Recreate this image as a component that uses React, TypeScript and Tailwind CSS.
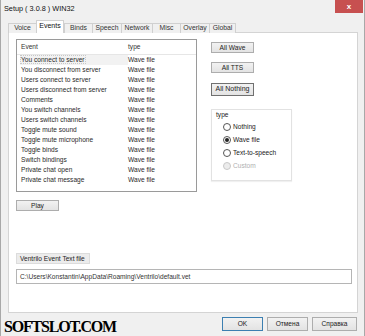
import React from 'react';

const tabs = [
  { label: 'Voice', w: 'w-[28px]' },
  { label: 'Events', w: 'w-[28px]', active: true },
  { label: 'Binds', w: 'w-[28px]' },
  { label: 'Speech', w: 'w-[29px]' },
  { label: 'Network', w: 'w-[31px]' },
  { label: 'Misc', w: 'w-[28px]' },
  { label: 'Overlay', w: 'w-[29px]' },
  { label: 'Global', w: 'w-[27px]' },
];

const events = [
  'You connect to server',
  'You disconnect from server',
  'Users connect to server',
  'Users disconnect from server',
  'Comments',
  'You switch channels',
  'Users switch channels',
  'Toggle mute sound',
  'Toggle mute microphone',
  'Toggle binds',
  'Switch bindings',
  'Private chat open',
  'Private chat message',
];

const radios = [
  { label: 'Nothing' },
  { label: 'Wave file', checked: true },
  { label: 'Text-to-speech' },
  { label: 'Custom', disabled: true },
];

function WinButton({ children, className = '' }: { children: React.ReactNode; className?: string }) {
  return (
    <div
      className={`flex items-center justify-center border bg-gradient-to-b from-[#f2f2f2] to-[#e3e3e3] text-[6.6px] text-[#222] ${className}`}
    >
      {children}
    </div>
  );
}

export default function App() {
  return (
    <div className="relative w-[365px] h-[336px] overflow-hidden bg-[#f0f0f0] border-x border-[#a8a8a8] font-['Liberation_Sans',Arial,sans-serif] text-[#222]">
      {/* title bar */}
      <div className="flex h-[20px] items-start">
        <div className="pl-[3px] pt-[4px] text-[7.3px] leading-[9px] text-[#111]">Setup ( 3.0.8 ) WIN32</div>
        <div className="ml-auto mr-[1px] flex h-[13px] w-[28px] items-center justify-center bg-[#c75050] text-[8px] font-bold leading-none text-white">
          x
        </div>
      </div>

      {/* tabs */}
      <div className="ml-[7px] flex h-[13px] items-end">
        {tabs.map((t, i) =>
          t.active ? (
            <div
              key={t.label}
              className={`relative z-10 flex h-[13px] items-center justify-center border border-b-0 border-[#d0d0d0] bg-white pb-[1px] text-[7px] text-[#111] ${t.w}`}
            >
              {t.label}
            </div>
          ) : (
            <div
              key={t.label}
              className={`flex h-[10px] items-center justify-center border-t border-l border-[#d0d0d0] bg-[#f0f0f0] text-[6.8px] text-[#333] ${i === tabs.length - 1 ? 'border-r' : ''} ${t.w}`}
            >
              {t.label}
            </div>
          )
        )}
      </div>

      {/* tab panel */}
      <div className="-mt-px ml-[7px] h-[281px] w-[350px] border border-[#d4d4d4] bg-white">
        <div className="flex pl-[7px] pt-[6px]">
          {/* event list */}
          <div className="h-[153px] w-[181px] border border-[#9a9a9a] bg-white">
            <div className="flex h-[15px] items-center border-b border-[#e6e6e6] text-[6.6px] text-[#333]">
              <span className="w-[111px] pl-[4px]">Event</span>
              <span>type</span>
            </div>
            {events.map((e, i) => (
              <div key={e} className="flex h-[10px] items-center text-[6.6px] text-[#2a2a2a]">
                <span className={`ml-[3px] w-[108px] pl-[1px] ${i === 0 ? 'bg-[#f2f2f2]' : ''}`}>
                  <span className={i === 0 ? 'outline outline-1 outline-dotted outline-[#c8c8c8]' : ''}>{e}</span>
                </span>
                <span>Wave file</span>
              </div>
            ))}
          </div>

          {/* right side */}
          <div className="ml-[14px] flex flex-col pt-[3px]">
            <WinButton className="h-[11px] w-[43px] border-[#adadad]">All Wave</WinButton>
            <WinButton className="mt-[9px] h-[11px] w-[43px] border-[#adadad]">All TTS</WinButton>
            <WinButton className="mt-[10px] h-[13px] w-[43px] border-[#707070] text-[7px]">All Nothing</WinButton>

            <div className="mt-[13px] h-[72px] w-[81px] border border-[#e2e2e2] bg-white shadow-[0_1px_1px_rgba(0,0,0,0.06)]">
              <div className="pl-[4px] pt-[1px] text-[6.6px] leading-[8px] text-[#222]">type</div>
              <div className="mt-[4px] flex flex-col gap-[5px] pl-[11px]">
                {radios.map((r) => (
                  <div key={r.label} className="flex h-[8px] items-center gap-[2px]">
                    <div
                      className={`flex h-[8px] w-[8px] items-center justify-center rounded-full border ${
                        r.disabled ? 'border-[#c8c8c8] bg-[#ececec]' : 'border-[#555] bg-white'
                      }`}
                    >
                      {r.checked && <div className="h-[4px] w-[4px] rounded-full bg-[#222]" />}
                    </div>
                    <span className={`text-[6.6px] ${r.disabled ? 'text-[#b0b0b0]' : 'text-[#222]'}`}>{r.label}</span>
                  </div>
                ))}
              </div>
            </div>
          </div>
        </div>

        <div className="pl-[7px]">
          <WinButton className="mt-[8px] h-[11px] w-[43px] border-[#adadad]">Play</WinButton>

          <div className="mt-[42px] flex h-[11px] w-[74px] items-center whitespace-nowrap border border-[#dcdcdc] bg-[#ececec] pl-[3px] text-[6.6px] text-[#222]">
            Ventrilo Event Text file
          </div>

          <div className="mt-[5px] flex h-[15px] w-[336px] items-center border border-[#b5b5b5] bg-white pl-[3px] text-[6.6px] text-[#333]">
            C:\Users\Konstantin\AppData\Roaming\Ventrilo\default.vet
          </div>
        </div>
      </div>

      {/* dialog buttons */}
      <div className="mt-[4px] flex justify-end gap-[4px] pr-[7px]">
        <WinButton className="h-[14px] w-[41px] border-[#3c7fb1]">OK</WinButton>
        <WinButton className="h-[14px] w-[41px] border-[#adadad]">Отмена</WinButton>
        <WinButton className="h-[14px] w-[45px] border-[#adadad]">Справка</WinButton>
      </div>

      {/* watermark */}
      <div className="absolute bottom-[1px] left-[3px] font-['Liberation_Serif',serif] text-[16px] font-bold leading-none tracking-[-1.2px] text-black">
        SOFTSLOT.COM
      </div>
    </div>
  );
}
